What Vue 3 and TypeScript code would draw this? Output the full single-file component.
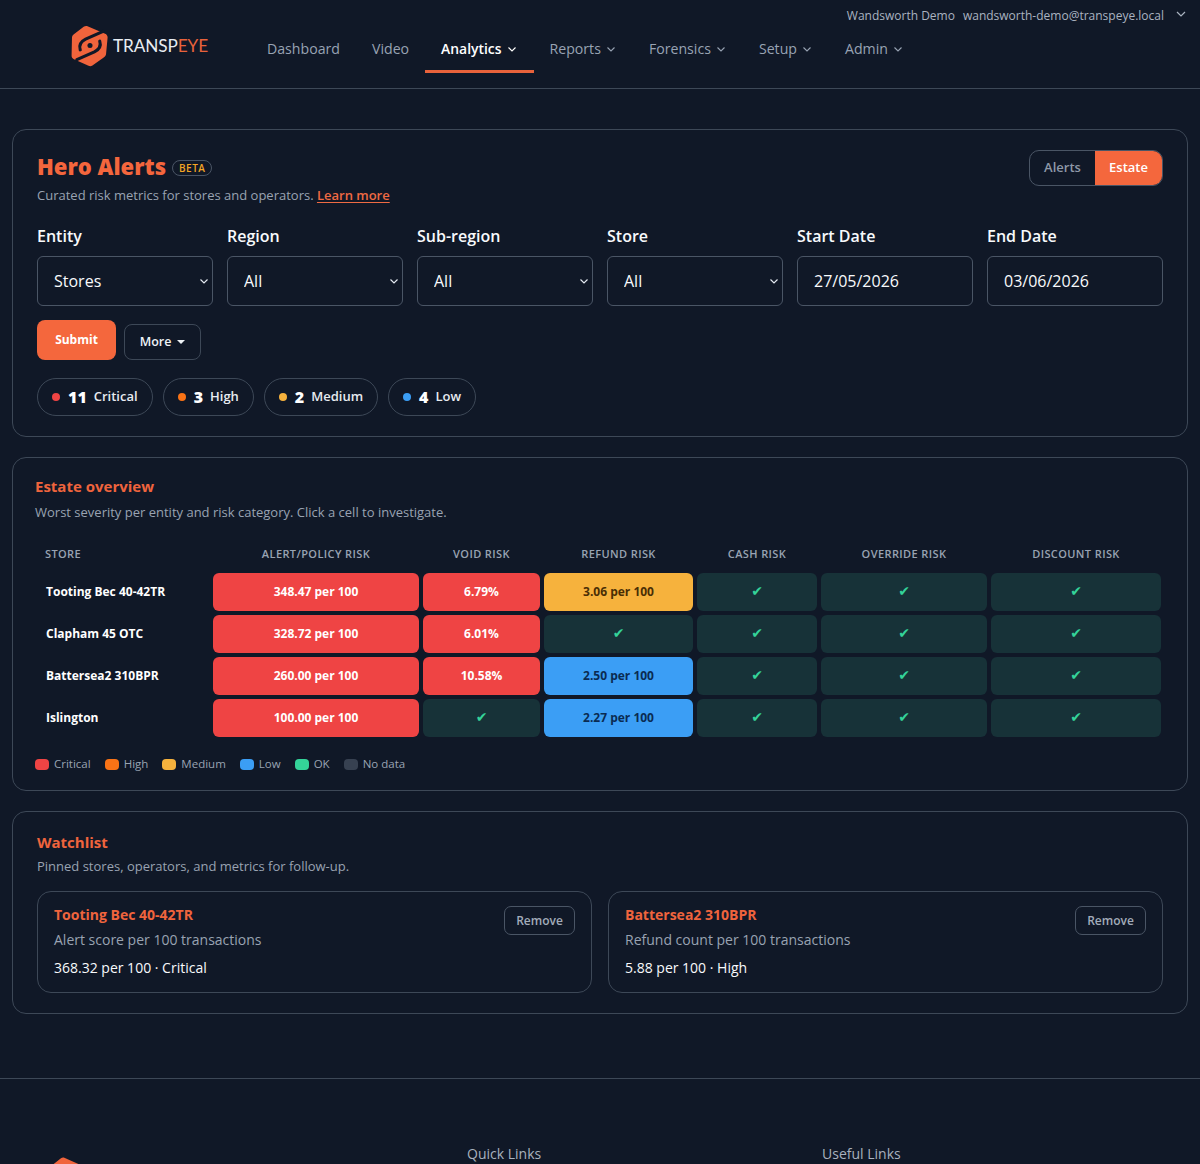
<script setup lang="ts">
interface NavItem { label: string; caret: boolean; active?: boolean }
interface Cell { text: string; level: string }

const nav: NavItem[] = [
  { label: 'Dashboard', caret: false },
  { label: 'Video', caret: false },
  { label: 'Analytics', caret: true, active: true },
  { label: 'Reports', caret: true },
  { label: 'Forensics', caret: true },
  { label: 'Setup', caret: true },
  { label: 'Admin', caret: true },
]
const selects = [
  { label: 'Entity', value: 'Stores' },
  { label: 'Region', value: 'All' },
  { label: 'Sub-region', value: 'All' },
  { label: 'Store', value: 'All' },
]
const dates = [
  { label: 'Start Date', value: '27/05/2026' },
  { label: 'End Date', value: '03/06/2026' },
]
const chips = [
  { n: '11', label: 'Critical', level: 'critical' },
  { n: '3', label: 'High', level: 'high' },
  { n: '2', label: 'Medium', level: 'medium' },
  { n: '4', label: 'Low', level: 'low' },
]
const heads = ['Store', 'Alert/Policy risk', 'Void risk', 'Refund risk', 'Cash risk', 'Override risk', 'Discount risk']
const ok: Cell = { text: '✔', level: 'ok' }
const rows: { name: string; cells: Cell[] }[] = [
  { name: 'Tooting Bec 40-42TR', cells: [{ text: '348.47 per 100', level: 'critical' }, { text: '6.79%', level: 'critical' }, { text: '3.06 per 100', level: 'medium' }, ok, ok, ok] },
  { name: 'Clapham 45 OTC', cells: [{ text: '328.72 per 100', level: 'critical' }, { text: '6.01%', level: 'critical' }, ok, ok, ok, ok] },
  { name: 'Battersea2 310BPR', cells: [{ text: '260.00 per 100', level: 'critical' }, { text: '10.58%', level: 'critical' }, { text: '2.50 per 100', level: 'low' }, ok, ok, ok] },
  { name: 'Islington', cells: [{ text: '100.00 per 100', level: 'critical' }, ok, { text: '2.27 per 100', level: 'low' }, ok, ok, ok] },
]
const legend = [
  { label: 'Critical', level: 'critical' },
  { label: 'High', level: 'high' },
  { label: 'Medium', level: 'medium' },
  { label: 'Low', level: 'low' },
  { label: 'OK', level: 'okay' },
  { label: 'No data', level: 'nodata' },
]
const watch = [
  { name: 'Tooting Bec 40-42TR', metric: 'Alert score per 100 transactions', value: '368.32 per 100 · Critical' },
  { name: 'Battersea2 310BPR', metric: 'Refund count per 100 transactions', value: '5.88 per 100 · High' },
]
</script>

<template>
  <div class="page">
    <header class="header">
      <div class="account">
        <span>Wandsworth Demo</span>
        <span>wandsworth-demo@transpeye.local</span>
        <svg class="account-caret" viewBox="0 0 12 12"><path d="M2 4l4 4 4-4" /></svg>
      </div>
      <div class="bar">
        <div class="logo">
          <svg class="mark" viewBox="0 0 38 42">
            <path class="hex" d="M17 .6 35 8.5c1.6.7 2.6 2 2.6 3.8l-1.6 17c-.2 1.6-1 2.8-2.4 3.6L22 41c-1.3.8-2.6.9-4 .3L3 34.500c-1.6-.7-2.5-2-2.4-3.8L1 12.500c.1-1.6.9-2.8 2.300-3.700L13 1.200c1.300-.9 2.600-1.100 4-.6Z" />
            <path class="swirl" d="M33 6 15 14c-5 2.500-7 6.500-5.500 11" />
            <path class="swirl" d="M6 35l18-8c5-2.500 7-6.500 5.500-11" />
            <circle class="eye" cx="19.500" cy="20.500" r="2.600" />
          </svg>
          <span class="wordmark">TRANSP<em>EYE</em></span>
        </div>
        <nav class="nav">
          <a v-for="item in nav" :key="item.label" class="nav-item" :class="{ active: item.active }">
            {{ item.label }}
            <svg v-if="item.caret" class="nav-caret" viewBox="0 0 12 12"><path d="M2.5 4.5 6 8l3.5-3.5" /></svg>
          </a>
        </nav>
      </div>
    </header>

    <main class="main">
      <section class="card hero">
        <div class="hero-top">
          <div>
            <div class="hero-title-row">
              <h1 class="hero-title">Hero Alerts</h1>
              <span class="beta">BETA</span>
            </div>
            <p class="muted hero-sub">Curated risk metrics for stores and operators. <a class="learn">Learn more</a></p>
          </div>
          <div class="toggle">
            <span class="toggle-off">Alerts</span>
            <span class="toggle-on">Estate</span>
          </div>
        </div>

        <div class="filters">
          <label v-for="s in selects" :key="s.label" class="field">
            <span class="field-label">{{ s.label }}</span>
            <span class="select-wrap">
              <select class="control"><option>{{ s.value }}</option></select>
              <svg class="select-caret" viewBox="0 0 12 12"><path d="M2.5 4.5 6 8l3.5-3.5" /></svg>
            </span>
          </label>
          <label v-for="d in dates" :key="d.label" class="field">
            <span class="field-label">{{ d.label }}</span>
            <input class="control" :value="d.value" />
          </label>
        </div>

        <div class="actions">
          <button class="submit">Submit</button>
          <button class="more">More <i class="more-caret"></i></button>
        </div>

        <div class="chips">
          <span v-for="c in chips" :key="c.label" class="chip">
            <i class="dot" :class="'bg-' + c.level"></i>
            <b class="chip-n">{{ c.n }}</b>
            <span class="chip-label">{{ c.label }}</span>
          </span>
        </div>
      </section>

      <section class="card estate">
        <h2 class="section-title">Estate overview</h2>
        <p class="muted estate-sub">Worst severity per entity and risk category. Click a cell to investigate.</p>
        <div class="matrix">
          <div v-for="(h, i) in heads" :key="h" class="th" :class="{ 'th-store': i === 0 }">{{ h }}</div>
          <template v-for="r in rows" :key="r.name">
            <div class="row-name">{{ r.name }}</div>
            <div v-for="(c, i) in r.cells" :key="i" class="cell" :class="'cell-' + c.level">{{ c.text }}</div>
          </template>
        </div>
        <div class="legend">
          <span v-for="l in legend" :key="l.label" class="legend-item">
            <i class="swatch" :class="'bg-' + l.level"></i>{{ l.label }}
          </span>
        </div>
      </section>

      <section class="card watch">
        <h2 class="section-title">Watchlist</h2>
        <p class="muted watch-sub">Pinned stores, operators, and metrics for follow-up.</p>
        <div class="watch-grid">
          <article v-for="w in watch" :key="w.name" class="watch-card">
            <div>
              <div class="watch-name">{{ w.name }}</div>
              <div class="watch-metric">{{ w.metric }}</div>
              <div class="watch-value">{{ w.value }}</div>
            </div>
            <button class="remove">Remove</button>
          </article>
        </div>
      </section>
    </main>

    <footer class="footer">
      <svg class="footer-mark" viewBox="0 0 38 42">
        <path class="hex" d="M17 .6 35 8.5c1.6.7 2.6 2 2.6 3.8l-1.6 17c-.2 1.6-1 2.8-2.4 3.6L22 41c-1.3.8-2.6.9-4 .3L3 34.500c-1.6-.7-2.5-2-2.4-3.8L1 12.500c.1-1.6.9-2.8 2.300-3.700L13 1.200c1.300-.9 2.600-1.100 4-.6Z" />
      </svg>
      <div class="footer-head">Quick Links</div>
      <div class="footer-head">Useful Links</div>
    </footer>
  </div>
</template>

<style>
html, body { margin: 0; background: #101827; overflow: hidden; }
</style>

<style scoped>
.page {
  height: 1164px;
  overflow: hidden;
  background: #101827;
  color: #f8fafc;
  font-family: "Open Sans", "Noto Sans", sans-serif;
  font-size: 14px;
}
h1, h2, p { margin: 0; }
i { display: block; font-style: normal; }
button, select, input { font-family: inherit; }

.header { height: 88px; border-bottom: 1px solid #3d4857; box-sizing: content-box; }
.account {
  display: flex; justify-content: flex-end; align-items: center; gap: 8px;
  height: 30px; padding-right: 13px; font-size: 12px; color: #aab3c0;
}
.account-caret { width: 12px; height: 12px; margin: -2px 0 0 3px; fill: none; stroke: #aab3c0; stroke-width: 1.2; }
.bar { display: flex; align-items: flex-start; height: 58px; }
.logo { display: flex; align-items: center; width: 251px; margin-top: -5px; padding-left: 71px; box-sizing: border-box; }
.mark { width: 37px; height: 42px; flex: none; }
.hex { fill: #f0643c; }
.swirl { fill: none; stroke: #101827; stroke-width: 3.2; stroke-linecap: round; }
.eye { fill: #101827; }
.wordmark { margin-left: 5px; font-family: Lato, sans-serif; font-size: 17.2px; line-height: 1; color: #e8edf3; margin-top: -1px; white-space: nowrap; letter-spacing: -.1px; }
.wordmark em { font-style: normal; color: #e8623b; }
.nav { display: flex; }
.nav-item {
  display: flex; align-items: center; gap: 4px; height: 43px; padding: 0 16px 6px; box-sizing: border-box;
  font-size: 14.15px; font-weight: 500; color: #98a3b3;
}
.nav-item.active { color: #fff; border-bottom: 3px solid #e8623b; padding-bottom: 3px; font-size: 13.9px; font-weight: 600; }
.nav-caret { width: 12px; height: 12px; fill: none; stroke: currentColor; stroke-width: 1.1; }

.main { padding: 40px 12px 0; display: flex; flex-direction: column; gap: 20px; }
.card { border: 1px solid #3d4857; border-radius: 14px; box-sizing: border-box; }
.muted { color: #99a3b2; font-size: 13px; line-height: 18px; }

.hero { height: 308px; padding: 19px 24px 20px; }
.hero-top { display: flex; justify-content: space-between; align-items: flex-start; height: 75px; }
.hero-title-row { display: flex; align-items: center; gap: 6px; height: 34px; }
.hero-title { font-size: 22px; line-height: 34px; font-weight: 800; color: #f4663d; }
.beta {
  margin-top: 3px; border: 1px solid #4a5565; border-radius: 8px; height: 14px; line-height: 15px; padding: 0 6px;
  font-size: 10px; font-weight: 600; letter-spacing: .5px; color: #f5a524;
}
.hero-sub { margin-top: 2px; line-height: 20px; }
.learn { color: #ef6a43; font-weight: 600; text-decoration: underline; text-underline-offset: 2px; }
.toggle { display: flex; height: 36px; width: 134px; margin-top: 1px; border: 1px solid #4a5565; border-radius: 10px; overflow: hidden; box-sizing: border-box; font-size: 13px; font-weight: 600; }
.toggle-off { width: 65px; display: flex; align-items: center; justify-content: center; color: #8e98a8; padding-bottom: 2px; }
.toggle-on { flex: 1; display: flex; align-items: center; justify-content: center; background: #f4673d; color: #fff; padding-bottom: 2px; }

.filters { display: grid; grid-template-columns: repeat(6, 176px); gap: 14px; }
.field { display: flex; flex-direction: column; gap: 8px; }
.field-label { font-size: 16px; line-height: 24px; font-weight: 600; color: #f8fafc; }
.select-wrap { position: relative; display: block; }
.control {
  display: block; width: 100%; height: 50px; box-sizing: border-box; padding: 0 16px;
  background: transparent; color: #f8fafc; border: 1px solid #4a5565; border-radius: 6px;
  font-size: 16px; appearance: none; outline: none;
}
.select-caret { position: absolute; right: 3px; top: 19px; width: 12px; height: 12px; fill: none; stroke: #e2e8f0; stroke-width: 1.2; pointer-events: none; }

.actions { display: flex; align-items: flex-end; gap: 8px; margin-top: 14px; height: 40px; }
.submit {
  width: 79px; height: 40px; border: 0; border-radius: 8px; background: #f4673d; color: #fff;
  font-size: 12px; font-weight: 700; padding: 0 0 2px;
}
.more {
  display: flex; align-items: center; justify-content: center; gap: 6px; width: 77px; height: 36px;
  background: transparent; color: #eef2f6; border: 1px solid #3d4857; border-radius: 8px; font-size: 12.5px; font-weight: 600; padding: 0 0 2px;
}
.more-caret { width: 0; height: 0; border: 4px solid transparent; border-top-color: #eef2f6; border-bottom: 0; margin-top: 2px; }
.chips { display: flex; gap: 10px; margin-top: 18px; }
.chip {
  display: flex; align-items: center; height: 38px; padding: 0 14px; box-sizing: border-box;
  border: 1px solid #3d4857; border-radius: 19px; font-size: 13px; color: #e7ebf0;
}
.chip-label { font-weight: 600; padding-bottom: 2px; }
.dot { width: 8px; height: 8px; border-radius: 50%; margin-right: 8px; }
.chip-n { font-size: 16px; font-weight: 800; color: #fff; margin-right: 7px; }

.bg-critical { background: #ef4444; }
.bg-high { background: #f97316; }
.bg-medium { background: #f6b23d; }
.bg-low { background: #3b9ef5; }
.bg-okay { background: #34d399; }
.bg-nodata { background: #374151; }

.estate { height: 334px; padding: 17px 22px; }
.section-title { font-size: 15px; line-height: 22px; font-weight: 700; color: #ef643d; }
.estate-sub { margin-top: 6px; }
.matrix {
  display: grid; grid-template-columns: 174px 206px 117px 149px 120px 166px 170px; gap: 4px;
  grid-auto-rows: 38px; grid-template-rows: 30px; margin-top: 18px;
}
.th { display: flex; align-items: center; justify-content: center; padding-bottom: 2px; box-sizing: border-box; font-size: 11px; font-weight: 600; letter-spacing: .4px; text-transform: uppercase; color: #99a3b2; }
.th-store { justify-content: flex-start; padding-left: 10px; }
.row-name { display: flex; align-items: center; padding: 0 0 2px 11px; font-size: 12px; font-weight: 700; color: #fff; white-space: nowrap; }
.cell { display: flex; align-items: center; justify-content: center; padding-bottom: 2px; box-sizing: border-box; border-radius: 6px; font-size: 12px; font-weight: 700; }
.cell-critical { background: #ef4444; color: #fff; }
.cell-medium { background: #f6b23d; color: #4a2e05; }
.cell-low { background: #3b9ef5; color: #0a2b52; }
.cell-ok { background: #173238; color: #34d399; font-family: "DejaVu Sans", sans-serif; font-size: 14px; font-weight: 400; }
.legend { display: flex; gap: 14px; margin-top: 19px; font-size: 11.5px; line-height: 16px; color: #99a3b2; }
.legend-item { display: flex; align-items: center; gap: 5px; }
.swatch { width: 14px; height: 11px; border-radius: 4px; }

.watch { height: 203px; padding: 19px 24px 20px; }
.watch-sub { margin-top: 3px; line-height: 20px; }
.watch-grid { display: grid; grid-template-columns: 555px 555px; gap: 16px; margin-top: 15px; }
.watch-card {
  display: flex; justify-content: space-between; align-items: flex-start; height: 102px; box-sizing: border-box;
  padding: 13px 16px; border: 1px solid #3d4857; border-radius: 14px;
}
.watch-name { font-size: 14px; line-height: 20px; font-weight: 700; color: #ef643d; }
.watch-metric { margin-top: 5px; font-size: 14px; line-height: 20px; color: #99a3b2; }
.watch-value { margin-top: 8px; font-size: 14px; line-height: 20px; color: #f8fafc; }
.remove {
  height: 29px; width: 71px; margin-top: 1px; padding: 0; background: transparent; border: 1px solid #4a5565; border-radius: 7px;
  color: #a2acba; font-size: 12px; font-weight: 600;
}

.footer {
  display: grid; grid-template-columns: 417px 355px 1fr; align-items: start;
  margin-top: 64px; padding: 65px 0 0 50px; border-top: 1px solid #3d4857;
}
.footer-mark { width: 32px; height: 36px; margin-top: 13px; }
.footer-head { font-size: 14px; line-height: 20px; color: #a8b1be; }
</style>
